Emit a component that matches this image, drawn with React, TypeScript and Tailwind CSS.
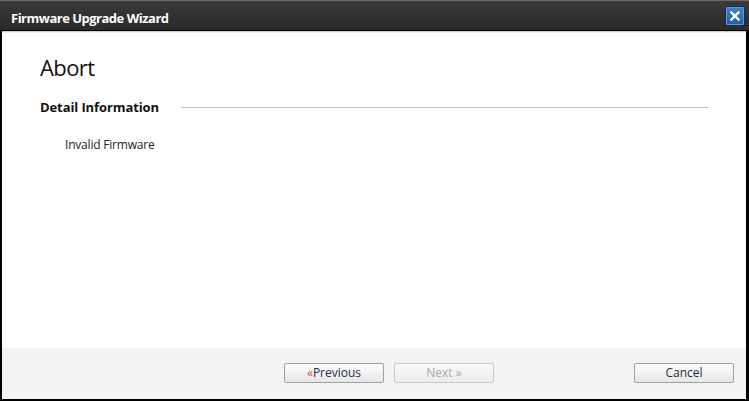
import React from "react";

const font = { fontFamily: '"Open Sans", "Liberation Sans", sans-serif' };

function Btn({ children, disabled }: { children: React.ReactNode; disabled?: boolean }) {
  return (
    <div
      className={
        "w-[100px] h-[20px] flex items-center justify-center rounded-[2px] border text-[12px] leading-none " +
        (disabled
          ? "border-[#c8c8c8] text-[#a8a8a8] bg-gradient-to-b from-[#f8f8f8] to-[#ececec]"
          : "border-[#a0a0a0] text-[#1e3050] bg-gradient-to-b from-[#fdfdfd] to-[#e6e6e6] shadow-[inset_0_1px_0_#fff]")
      }
    >
      {children}
    </div>
  );
}

export default function App() {
  return (
    <div className="w-[749px] h-[401px] bg-black flex flex-col overflow-hidden" style={font}>
      <div className="h-[31px] shrink-0 border-t border-[#6a6a6a] bg-gradient-to-b from-[#3a3a3a] to-[#2b2b2b] border-b border-b-black flex items-center justify-between pl-[11px] pr-[3px]">
        <span className="text-white font-bold text-[13px] tracking-[-0.5px] leading-none mt-[6px]">
          Firmware Upgrade Wizard
        </span>
        <div className="w-[20px] h-[20px] mr-[1px] rounded-[2px] border border-[#0e2f57] bg-gradient-to-b from-[#3d85c6] to-[#1f5fa3] flex items-center justify-center shadow-[inset_0_0_0_1px_#5c9ad6]">
          <svg width="10" height="10" viewBox="0 0 10 10">
            <path d="M1.5 1.5 L8.5 8.5 M8.5 1.5 L1.5 8.5" stroke="white" strokeWidth="2.4" strokeLinecap="square" />
          </svg>
        </div>
      </div>
      <div className="flex-1 flex pl-[2px] pr-[3px] pb-[2px]">
        <div className="flex-1 flex flex-col bg-white">
          <div className="h-[2px] bg-gradient-to-b from-[#bdbdbd] to-white" />
          <div className="flex-1 pl-[38px] pr-[38px] pt-[21px]">
            <div className="text-[22px] leading-[26px] text-[#111] tracking-[-0.6px]">Abort</div>
            <div className="flex items-center mt-[18px] gap-[22px]">
              <span className="text-[13px] font-bold text-[#111] leading-[18px] whitespace-nowrap tracking-[-0.1px]">
                Detail Information
              </span>
              <div className="flex-1 h-px bg-[#bcbcbc]" />
            </div>
            <div className="pl-[25px] mt-[21px] text-[12px] text-[#222] leading-[16px] tracking-[-0.2px]">
              Invalid Firmware
            </div>
          </div>
          <div className="h-[51px] bg-[#f3f3f3] flex items-start pt-[15px] pl-[282px] pr-[12px]">
            <Btn>
              <span className="text-[#d0502a]">«</span>
              <span>Previous</span>
            </Btn>
            <div className="ml-[10px]">
              <Btn disabled>Next »</Btn>
            </div>
            <div className="ml-auto">
              <Btn>
                <span className="text-[#1e2a40]">Cancel</span>
              </Btn>
            </div>
          </div>
        </div>
      </div>
    </div>
  );
}
